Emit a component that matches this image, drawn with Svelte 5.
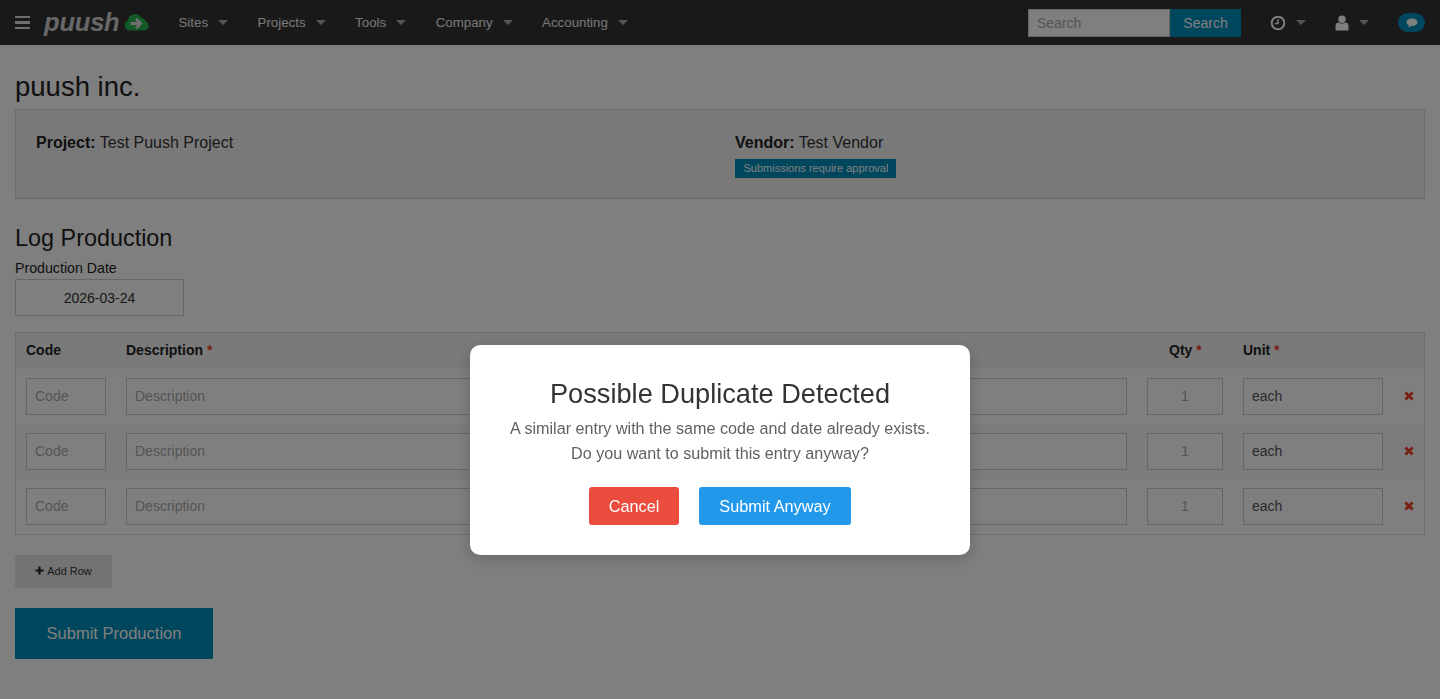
<script lang="ts">
	const navItems = ['Sites', 'Projects', 'Tools', 'Company', 'Accounting'];
	const rows = [1, 2, 3];
</script>

<nav class="topbar">
	<button class="burger" aria-label="Menu">
		<span></span><span></span><span></span>
	</button>
	<a class="logo" href="#top">
		<span class="logo-text">puush</span>
		<svg class="logo-cloud" viewBox="0 0 26 19" width="26" height="19">
			<path fill="#26b04e" d="M5.500 18.500A5 5 0 0 1 4 8.800 7 7 0 0 1 17.300 6a4 4 0 0 1 4 3 5 5 0 0 1-.3 9.500z"/>
			<path fill="none" stroke="#ddd" stroke-width="2.800" d="M6.500 11.500h10M12 6.800l4.700 4.700-4.700 4.700"/>
		</svg>
	</a>
	<ul class="menu">
		{#each navItems as item}
			<li>{item}<i class="caret"></i></li>
		{/each}
	</ul>
	<div class="nav-right">
		<form class="search">
			<input type="text" placeholder="Search" />
			<button type="button">Search</button>
		</form>
		<div class="nav-icon clock">
			<svg viewBox="0 0 16 16" width="16" height="16">
				<circle cx="8" cy="8" r="6.300" fill="none" stroke="#fff" stroke-width="2"/>
				<path d="M8 4.200v4.200H4.800" fill="none" stroke="#fff" stroke-width="1.500"/>
			</svg>
			<i class="caret"></i>
		</div>
		<div class="nav-icon user">
			<svg viewBox="0 0 14 16" width="14" height="16">
				<circle cx="7" cy="4.200" r="3.700" fill="#fff"/>
				<path fill="#fff" d="M0.500 15.500V11c0-2 1.300-3.200 3-3.400 1.800 1.200 5.200 1.200 7 0 1.700 .2 3 1.400 3 3.400v4.500z"/>
			</svg>
			<i class="caret"></i>
		</div>
		<div class="chat">
			<svg viewBox="0 0 12 10" width="12" height="10">
				<path fill="#fff" d="M6 .5c3 0 5.500 1.700 5.500 3.800S9 8 6 8c-.4 0-.8 0-1.200-.1C4 8.700 3 9.300 1.800 9.500c.6-.6 1-1.300 1.100-2.100C1.400 6.700.5 5.600.5 4.300.5 2.200 3 .5 6 .5z"/>
			</svg>
		</div>
	</div>
</nav>

<main class="page">
	<h1>puush inc.</h1>
	<section class="info">
		<div class="info-col">
			<p><strong>Project:</strong> Test Puush Project</p>
		</div>
		<div class="info-col">
			<p><strong>Vendor:</strong> Test Vendor</p>
			<span class="label">Submissions require approval</span>
		</div>
	</section>

	<h2>Log Production</h2>
	<label class="date-label" for="prod-date">Production Date</label>
	<input id="prod-date" class="date" type="text" value="2026-03-24" />

	<table>
		<thead>
			<tr>
				<th class="c-code">Code</th>
				<th>Description <em>*</em></th>
				<th class="c-qty">Qty <em>*</em></th>
				<th class="c-unit">Unit <em>*</em></th>
				<th class="c-del"></th>
			</tr>
		</thead>
		<tbody>
			{#each rows as r}
				<tr>
					<td><input type="text" placeholder="Code" /></td>
					<td><input type="text" placeholder="Description" /></td>
					<td><input class="qty" type="text" placeholder="1" /></td>
					<td><input type="text" value="each" /></td>
					<td class="del">
						<svg viewBox="0 0 10 10" width="10" height="10">
							<path d="M1.400 1.400l7.200 7.200M8.600 1.400l-7.200 7.200" stroke="#f04124" stroke-width="2.800" fill="none"/>
						</svg>
					</td>
				</tr>
			{/each}
		</tbody>
	</table>

	<button class="add-row">
		<svg viewBox="0 0 10 10" width="9" height="9"><path d="M5 .5v9M.5 5h9" stroke="#222" stroke-width="2.400"/></svg>
		Add Row
	</button>
	<button class="submit">Submit Production</button>
</main>

<div class="overlay">
	<div class="modal">
		<h3>Possible Duplicate Detected</h3>
		<p>A similar entry with the same code and date already exists.<br />Do you want to submit this entry anyway?</p>
		<div class="actions">
			<button class="cancel">Cancel</button>
			<button class="confirm">Submit Anyway</button>
		</div>
	</div>
</div>

<style>
	:global(body) {
		background: #fff;
		color: #222;
		font-family: "Liberation Sans", Arial, sans-serif;
	}

	* {
		box-sizing: border-box;
	}

	.topbar {
		display: flex;
		align-items: center;
		height: 45px;
		background: #333;
		color: #fff;
		font-size: 13.300px;
		padding-left: 15px;
	}

	.burger {
		display: flex;
		flex-direction: column;
		gap: 3px;
		width: 15px;
		padding: 0;
		border: none;
		background: none;
	}

	.burger span {
		height: 2.500px;
		background: #ddd;
	}

	.logo {
		display: flex;
		align-items: center;
		margin-left: 14px;
		text-decoration: none;
	}

	.logo-text {
		font-size: 25.500px;
		font-weight: 700;
		font-style: italic;
		color: #d0d0d0;
		line-height: 45px;
		letter-spacing: -0.2px;
	}

	.logo-cloud {
		margin-left: 4px;
		margin-top: -3px;
	}

	.menu {
		display: flex;
		list-style: none;
		margin: 0 0 0 29px;
		padding: 0;
	}

	.menu li {
		display: flex;
		align-items: center;
		margin-right: 29.500px;
		color: #eee;
	}

	.caret {
		display: inline-block;
		width: 0;
		height: 0;
		margin-left: 10px;
		border: 5px solid transparent;
		border-top-color: #aaa;
		border-bottom-width: 0;
		margin-top: -1px;
	}

	.nav-right {
		display: flex;
		align-items: center;
		margin-left: auto;
		padding-right: 15px;
	}

	.search {
		display: flex;
		height: 28px;
		margin: 0;
	}

	.search input {
		width: 142px;
		height: 28px;
		padding: 0 8px;
		border: 1px solid #ccc;
		background: #fff;
		font: 14px "Liberation Sans", Arial, sans-serif;
	}

	.search input::placeholder {
		color: #aaa;
	}

	.search button {
		width: 71px;
		border: none;
		background: #008cba;
		color: #fff;
		font: 14px "Liberation Sans", Arial, sans-serif;
		padding: 0;
	}

	.nav-icon {
		display: flex;
		align-items: center;
		color: #fff;
	}

	.clock {
		margin-left: 29px;
	}

	.user {
		margin-left: 29px;
	}

	.nav-icon .caret {
		margin-left: 10px;
	}

	.chat {
		display: flex;
		align-items: center;
		justify-content: center;
		width: 27px;
		height: 19px;
		margin-left: 29px;
		border-radius: 10px;
		background: #008cba;
	}

	.page {
		padding: 0 15px 40px;
	}

	h1 {
		margin: 0;
		padding-top: 25px;
		font-size: 27.500px;
		font-weight: 400;
		line-height: 34px;
		color: #222;
	}

	.info {
		display: flex;
		height: 90px;
		margin-top: 5px;
		padding: 20px;
		border: 1px solid #d8d8d8;
		background: #f2f2f2;
		font-size: 16px;
	}

	.info-col {
		flex: none;
		width: 699px;
	}

	.info-col + .info-col {
		width: auto;
	}

	.info-col p {
		margin: 2px 0 0;
		line-height: 22px;
		color: #333;
	}

	.info-col strong {
		color: #222;
	}

	.label {
		display: inline-block;
		margin-top: 5px;
		padding: 0 8px 0 8.500px;
		background: #008cba;
		color: #fff;
		font-size: 11px;
		line-height: 19px;
	}

	h2 {
		margin: 24px 0 0;
		font-size: 23.400px;
		font-weight: 400;
		line-height: 30px;
	}

	.date-label {
		display: block;
		margin-top: 7px;
		font-size: 14.200px;
		line-height: 17px;
	}

	.date {
		display: block;
		width: 169px;
		height: 37px;
		margin-top: 2px;
		border: 1px solid #ccc;
		background: #fff;
		text-align: center;
		font: 14px "Liberation Sans", Arial, sans-serif;
		color: #333;
	}

	table {
		width: 100%;
		margin-top: 16px;
		border: 1px solid #ddd;
		border-collapse: separate;
		border-spacing: 0;
		table-layout: fixed;
		background: #fff;
	}

	th {
		height: 36px;
		padding: 0 10px 2px;
		background: #f5f5f5;
		font-size: 14px;
		font-weight: 700;
		text-align: left;
		color: #222;
	}

	th em {
		color: #f04124;
		font-style: normal;
	}

	.c-code {
		width: 100px;
	}

	.c-qty {
		width: 96px;
		padding-left: 32px;
	}

	.c-unit {
		width: 160px;
	}

	.c-del {
		width: 31px;
	}

	td {
		height: 55px;
		padding: 0 10px;
	}

	tbody tr:nth-child(even) {
		background: #f9f9f9;
	}

	td input {
		display: block;
		width: 100%;
		height: 37px;
		padding: 0 8px 2px;
		border: 1px solid #ccc;
		background: #fff;
		font: 14px "Liberation Sans", Arial, sans-serif;
		color: #555;
	}

	td input::placeholder {
		color: #aaa;
	}

	td input.qty {
		text-align: center;
	}

	td.del {
		padding: 0 0 2px;
		text-align: center;
	}

	.add-row {
		display: flex;
		align-items: center;
		justify-content: center;
		gap: 3px;
		width: 97px;
		height: 33px;
		margin-top: 20px;
		padding: 0 0 2px;
		border: none;
		background: #e7e7e7;
		color: #333;
		font: 11px "Liberation Sans", Arial, sans-serif;
	}

	.submit {
		display: block;
		width: 198px;
		height: 51px;
		margin-top: 20px;
		padding: 0 0 1px;
		border: none;
		background: #008cba;
		color: #fff;
		font: 16.500px "Liberation Sans", Arial, sans-serif;
	}

	.overlay {
		position: fixed;
		inset: 0;
		display: flex;
		justify-content: center;
		align-items: flex-start;
		padding-top: 345px;
		background: rgba(0, 0, 0, 0.5);
	}

	.modal {
		width: 500px;
		height: 210px;
		padding-top: 33px;
		border-radius: 10px;
		background: #fff;
		box-shadow: 0 4px 16px rgba(0, 0, 0, 0.2);
		text-align: center;
	}

	.modal h3 {
		margin: 0;
		font-size: 27.200px;
		font-weight: 400;
		line-height: 32px;
		color: #333;
	}

	.modal p {
		margin: 6px 0 0;
		font-size: 16.150px;
		line-height: 25px;
		color: #616161;
	}

	.actions {
		display: flex;
		justify-content: center;
		gap: 20px;
		margin-top: 21px;
	}

	.actions button {
		height: 38px;
		padding: 0;
		border: none;
		border-radius: 3px;
		color: #fff;
		font: 16.300px "Liberation Sans", Arial, sans-serif;
	}

	.cancel {
		width: 90px;
		background: #ea4c3e;
	}

	.confirm {
		width: 152px;
		background: #2298ea;
	}
</style>
